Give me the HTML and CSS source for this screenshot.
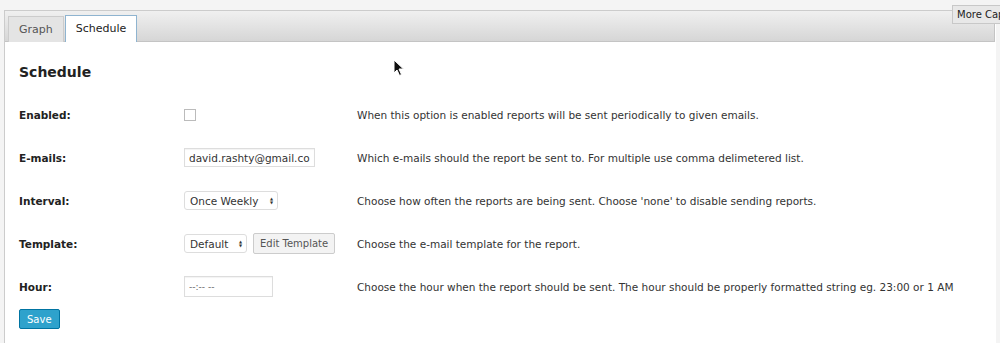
FILE: index.html
```html
<!DOCTYPE html>
<html lang="en">
<head>
  <meta charset="UTF-8" />
  <title>Schedule</title>
  <link rel="stylesheet" href="styles.css">
</head>
<body>

  <div class="tooltip">More Captions</div>

  <div class="panel">
    <div class="tab-bar">
      <a class="tab" href="#">Graph</a>
      <a class="tab active" href="#">Schedule</a>
    </div>

    <div class="tab-content">
      <h2>Schedule</h2>

      <div class="form-row">
        <label class="form-label">Enabled:</label>
        <div class="form-field"><span class="checkbox"></span></div>
        <p class="form-desc">When this option is enabled reports will be sent periodically to given emails.</p>
      </div>

      <div class="form-row">
        <label class="form-label">E-mails:</label>
        <div class="form-field"><input class="text-input email" type="text" value="david.rashty@gmail.com"></div>
        <p class="form-desc">Which e-mails should the report be sent to. For multiple use comma delimetered list.</p>
      </div>

      <div class="form-row">
        <label class="form-label">Interval:</label>
        <div class="form-field"><span class="select interval">Once Weekly <span class="arrows">&#9650;<br>&#9660;</span></span></div>
        <p class="form-desc">Choose how often the reports are being sent. Choose 'none' to disable sending reports.</p>
      </div>

      <div class="form-row">
        <label class="form-label">Template:</label>
        <div class="form-field">
          <span class="select template">Default <span class="arrows">&#9650;<br>&#9660;</span></span>
          <button class="btn">Edit Template</button>
        </div>
        <p class="form-desc">Choose the e-mail template for the report.</p>
      </div>

      <div class="form-row">
        <label class="form-label">Hour:</label>
        <div class="form-field"><span class="text-input hour">--:-- --</span></div>
        <p class="form-desc">Choose the hour when the report should be sent. The hour should be properly formatted string eg. 23:00 or 1 AM</p>
      </div>

      <button class="btn-save">Save</button>
    </div>
  </div>

  <svg class="cursor" width="12" height="18" viewBox="0 0 12 18">
    <path d="M1 1 L1 14 L4 11 L6.5 16.5 L8.5 15.5 L6 10 L10.5 10 Z" fill="#111" stroke="#fff" stroke-width="1"/>
  </svg>

</body>
</html>
```

FILE: styles.css
```css
body {
  margin: 0;
  font-family: 'DejaVu Sans', Verdana, sans-serif;
  font-size: 10.5px;
  color: #333;
  background: #f4f4f4;
  height: 343px;
  overflow: hidden;
  position: relative;
}

.tooltip {
  position: absolute;
  top: 5px;
  left: 952px;
  padding: 3px 4px;
  background: #e8e8e8;
  border: 1px solid #c8c8c8;
  font-size: 10px;
  color: #222;
  white-space: nowrap;
  z-index: 10;
}

.panel {
  margin: 10px 4px 0 4px;
  background: #fff;
  border-left: 1px solid #ccc;
  border-top: 1px solid #ccc;
  height: 340px;
}

.tab-bar {
  display: flex;
  align-items: flex-end;
  height: 30px;
  padding-left: 3px;
  margin-right: 1px;
  background: linear-gradient(#f0f0f0, #d6d6d6);
  border-bottom: 1px solid #c4c4c4;
  border-right: 1px solid #c4c4c4;
}

.tab {
  display: block;
  height: 25px;
  line-height: 25px;
  padding: 0 10px;
  font-size: 11px;
  color: #555;
  text-decoration: none;
  background: #e4e4e4;
  border: 1px solid #ccc;
  border-bottom: none;
  margin-bottom: -1px;
}

.tab.active {
  background: #fff;
  color: #222;
  border: 1px solid #8fb4d0;
  border-bottom: none;
  height: 26px;
  margin-left: 1px;
}

.tab-content {
  padding: 22px 14px 0 14px;
}

.tab-content h2 {
  margin: 0 0 13px 0;
  font-size: 14px;
  font-weight: bold;
  color: #222;
}

.form-row {
  display: flex;
  align-items: center;
  height: 43px;
}

.form-label {
  width: 165px;
  font-weight: bold;
  color: #222;
}

.form-field {
  width: 173px;
  display: flex;
  align-items: center;
  gap: 6px;
}

.form-desc {
  margin: 0;
  color: #333;
  white-space: nowrap;
}

.checkbox {
  display: block;
  width: 10px;
  height: 10px;
  border: 1px solid #bbb;
  background: #fff;
}

.text-input {
  box-sizing: border-box;
  height: 19px;
  padding: 0 4px;
  font-family: 'DejaVu Sans', Verdana, sans-serif;
  font-size: 10.5px;
  color: #333;
  border: 1px solid #ddd;
  background: #fff;
  box-shadow: inset 0 1px 1px rgba(0,0,0,0.05);
  outline: none;
}

.text-input.email {
  width: 131px;
}

.text-input.hour {
  display: flex;
  align-items: center;
  width: 89px;
  height: 21px;
  color: #666;
  font-size: 9px;
}

.select {
  box-sizing: border-box;
  display: flex;
  align-items: center;
  justify-content: space-between;
  height: 19px;
  padding: 0 4px 0 5px;
  border: 1px solid #ddd;
  border-radius: 3px;
  background: #fff;
  color: #333;
}

.select.interval {
  width: 94px;
}

.select.template {
  width: 63px;
}

.arrows {
  font-size: 4px;
  line-height: 4px;
  color: #333;
}

.btn {
  box-sizing: border-box;
  height: 21px;
  padding: 0 6px;
  font-family: 'DejaVu Sans', Verdana, sans-serif;
  font-size: 10px;
  color: #555;
  background: #f3f3f3;
  border: 1px solid #ccc;
  border-radius: 2px;
}

.btn-save {
  margin-top: 1px;
  height: 20px;
  padding: 0 7px;
  font-family: 'DejaVu Sans', Verdana, sans-serif;
  font-size: 10px;
  color: #fff;
  background: #2ea2cc;
  border: 1px solid #0074a2;
  border-radius: 2px;
}

.cursor {
  position: absolute;
  left: 393px;
  top: 59px;
}
```
